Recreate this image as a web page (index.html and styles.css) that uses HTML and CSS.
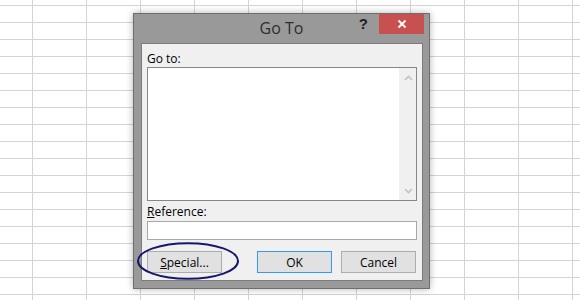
FILE: index.html
```html
<!DOCTYPE html>
<html lang="en">
<head>
  <meta charset="UTF-8">
  <title>Go To</title>
  <link rel="stylesheet" href="styles.css">
</head>
<body>
  <div class="dialog">
    <div class="titlebar">
      <span></span>
      <span class="title">Go To</span>
      <div class="controls">
        <span class="help">?</span>
        <button class="close" aria-label="Close">
          <svg viewBox="0 0 10 10" width="10" height="10">
            <path d="M1.5 1.5L8.5 8.5M8.5 1.5L1.5 8.5" stroke="#fff" stroke-width="1.8" fill="none"/>
          </svg>
        </button>
      </div>
    </div>

    <div class="panel">
      <div class="label">Go to:</div>
      <div class="listbox">
        <div class="list-items"></div>
        <div class="scrollbar">
          <svg viewBox="0 0 9 6" width="9" height="6">
            <path d="M1 5L4.5 1.5L8 5" stroke="#c2c2c2" stroke-width="1.6" fill="none"/>
          </svg>
          <svg viewBox="0 0 9 6" width="9" height="6">
            <path d="M1 1L4.5 4.5L8 1" stroke="#c2c2c2" stroke-width="1.6" fill="none"/>
          </svg>
        </div>
      </div>

      <div class="label ref-label"><u>R</u>eference:</div>
      <input type="text" class="ref-input">

      <div class="buttons">
        <button class="btn"><u>S</u>pecial...</button>
        <button class="btn btn-default">OK</button>
        <button class="btn">Cancel</button>
      </div>
    </div>

    <svg class="highlight" viewBox="0 0 102 38" width="102" height="38">
      <ellipse cx="51" cy="19" rx="50" ry="17.8" fill="none" stroke="#17176b" stroke-width="2"/>
    </svg>
  </div>
</body>
</html>
```

FILE: styles.css
```css
/* 基础 */
* {
  box-sizing: border-box;
}

body {
  margin: 0;
  height: 300px;
  font-family: "Segoe UI", "Open Sans", "Noto Sans", sans-serif;
  font-size: 12px;
  color: #000;
  background-color: #ffffff;
  background-image:
    linear-gradient(to right, #d4d4d4 1px, transparent 1px),
    linear-gradient(to bottom, #d4d4d4 1px, transparent 1px);
  background-size: 54px 17px;
  background-position: 32px 5px;
}

/* 对话框窗口 */
.dialog {
  position: absolute;
  left: 133px;
  top: 13px;
  width: 297px;
  height: 276px;
  background: #999999;
  border: 1px solid #6e6e6e;
  box-shadow: 0 0 7px rgba(0, 0, 0, 0.3);
  display: flex;
  flex-direction: column;
}

/* 标题栏 */
.titlebar {
  height: 29px;
  display: grid;
  grid-template-columns: 1fr auto 1fr;
  align-items: start;
}

.title {
  font-size: 16px;
  line-height: 27px;
  padding-top: 1px;
  color: #2e2e2e;
}

.controls {
  display: flex;
  justify-content: flex-end;
  align-items: flex-start;
  padding-right: 5px;
}

.help {
  font-family: "Liberation Sans", Arial, sans-serif;
  font-weight: bold;
  font-size: 15px;
  line-height: 20px;
  color: #222222;
  margin-right: 11px;
}

.close {
  width: 45px;
  height: 20px;
  border: none;
  padding: 0;
  background: #c75050;
  display: flex;
  align-items: center;
  justify-content: center;
}

/* 内容面板 */
.panel {
  flex: 1;
  margin: 0 6px 7px 7px;
  background: #f0f0f0;
  border: 1px solid #7c7c7c;
  padding: 6px 5px 7px 5px;
  display: flex;
  flex-direction: column;
}

.label {
  line-height: 17px;
  height: 17px;
}

.ref-label {
  margin-top: 2px;
}

.listbox {
  height: 134px;
  border: 1px solid #828790;
  background: #ffffff;
  display: flex;
}

.list-items {
  flex: 1;
}

.scrollbar {
  width: 17px;
  background: #f0f0f0;
  display: flex;
  flex-direction: column;
  justify-content: space-between;
  align-items: center;
  padding: 7px 0 6px 1px;
}

.ref-input {
  margin: 1px 0 0 0;
  height: 19px;
  border: 1px solid #a8a8a8;
  background: #ffffff;
  outline: none;
}

/* 按钮 */
.buttons {
  margin-top: 11px;
  display: flex;
  gap: 9px;
  padding-right: 1px;
}

.btn {
  width: 75px;
  height: 22px;
  padding: 0;
  font-family: inherit;
  font-size: 12px;
  color: #000;
  background: #e1e1e1;
  border: 1px solid #adadad;
}

.btn:first-child {
  margin-right: auto;
}

.btn-default {
  border-color: #3399ff;
}

/* 圈注 */
.highlight {
  position: absolute;
  left: 3px;
  top: 228px;
}
```
